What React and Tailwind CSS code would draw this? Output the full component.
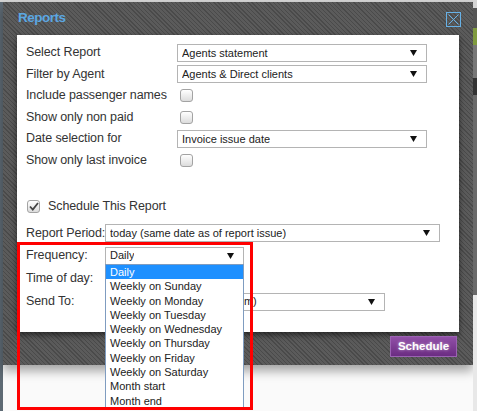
import React from 'react'

const stripes =
  'bg-[image:repeating-linear-gradient(45deg,#4a4a4a_0px,#4a4a4a_1px,#5b5b5b_1px,#5b5b5b_3px)]'

function Arrow() {
  return (
    <svg width="7" height="6" viewBox="0 0 7 6" className="shrink-0">
      <polygon points="0,0 7,0 3.5,6" fill="#111" />
    </svg>
  )
}

function Select({ className = '', children }) {
  return (
    <div
      className={`flex items-center justify-between h-[18px] border border-[#b4b4b4] bg-white pl-[4px] pr-[9px] text-[11px] text-[#222] ${className}`}
    >
      <span className="whitespace-nowrap overflow-hidden">{children}</span>
      <Arrow />
    </div>
  )
}

function Checkbox({ checked = false }) {
  return (
    <div className="w-[13px] h-[13px] rounded-[3px] border border-[#a3a3a3] bg-[linear-gradient(#ffffff,#dcdcdc)] flex items-center justify-center">
      {checked && (
        <svg width="10" height="9" viewBox="0 0 10 9">
          <path d="M1 4.5 L3.8 7.5 L9 1" fill="none" stroke="#444" strokeWidth="1.8" />
        </svg>
      )}
    </div>
  )
}

const rows = [
  { label: 'Select Report', select: 'Agents statement' },
  { label: 'Filter by Agent', select: 'Agents & Direct clients' },
  { label: 'Include passenger names' },
  { label: 'Show only non paid' },
  { label: 'Date selection for', select: 'Invoice issue date' },
  { label: 'Show only last invoice' },
]

const frequencies = [
  'Daily',
  'Weekly on Sunday',
  'Weekly on Monday',
  'Weekly on Tuesday',
  'Weekly on Wednesday',
  'Weekly on Thursday',
  'Weekly on Friday',
  'Weekly on Saturday',
  'Month start',
  'Month end',
]

export default function App() {
  return (
    <div className="relative w-[477px] h-[411px] overflow-hidden bg-[#fafafa] font-['Liberation_Sans',Arial,sans-serif] flex">
      {/* page behind, left edge */}
      <div className="w-[3px] flex flex-col">
        <div className="h-[2px] bg-[#d4d4d4]" />
        <div className="flex-1 bg-[#5e6a74]" />
      </div>

      {/* dialog */}
      <div className="w-[470px] flex flex-col">
        <div className="h-[2px] bg-[#d4d4d4]" />
        <div className={`h-[363px] flex flex-col ${stripes} shadow-[0_6px_10px_rgba(0,0,0,0.35)]`}>
          {/* title bar */}
          <div className="h-[33px] flex items-center justify-between pl-[15px] pr-[12px]">
            <span className="text-[13.5px] font-bold tracking-[-0.5px] text-[#5ba7e2]">Reports</span>
            <div className="w-[15px] h-[15px] border border-[#67b1e6] flex items-center justify-center mt-[1px]">
              <svg width="11" height="11" viewBox="0 0 11 11">
                <path d="M0.5 0.5 L10.5 10.5 M10.5 0.5 L0.5 10.5" stroke="#67b1e6" strokeWidth="1" />
              </svg>
            </div>
          </div>

          {/* white content panel */}
          <div className="mx-[14px] h-[297px] bg-white shadow-[0_3px_6px_rgba(0,0,0,0.55)] pt-[7px] pl-[9px] text-[12.5px] tracking-[-0.1px] text-[#333]">
            {rows.map((row) => (
              <div key={row.label} className="flex items-center h-[21.5px]">
                <span className="w-[151px] whitespace-nowrap">{row.label}</span>
                {row.select ? (
                  <Select className="w-[250px] tracking-normal">{row.select}</Select>
                ) : (
                  <div className="pl-[3px]">
                    <Checkbox />
                  </div>
                )}
              </div>
            ))}

            <div className="flex items-center h-[22px] mt-[24px] pl-[1px] gap-[8px]">
              <Checkbox checked />
              <span>Schedule This Report</span>
            </div>

            <div className="flex items-center h-[22px] mt-[5px]">
              <span className="w-[79px] whitespace-nowrap">Report Period:</span>
              <Select className="w-[335px] tracking-normal">today (same date as of report issue)</Select>
            </div>

            <div className="flex items-center h-[23px]">
              <span className="w-[79px]">Frequency:</span>
              <Select className="w-[139px] h-[17px] tracking-normal border-[#a8a8a8]">Daily</Select>
            </div>
            <div className="flex items-center h-[23px]">
              <span className="w-[79px]">Time of day:</span>
            </div>
            <div className="flex items-center h-[23px]">
              <span className="w-[79px]">Send To:</span>
              <Select className="w-[280px] tracking-normal">Agent email (from the system)</Select>
            </div>
          </div>

          {/* footer */}
          <div className="flex justify-end pr-[16px] pt-[4px]">
            <button className="w-[67px] h-[21px] border border-[#9b63b3] bg-[linear-gradient(#9150a8,#6b2c82)] text-white text-[11.5px] font-bold [text-shadow:0_0_3px_rgba(255,255,255,0.6)]">
              Schedule
            </button>
          </div>
        </div>
      </div>

      {/* page behind, right edge */}
      <div className="w-[4px] flex flex-col">
        <div className="h-[8px] bg-[#d4d4d4]" />
        <div className="h-[20px] bg-[#555]" />
        <div className="h-[17px] bg-[#7f9a3e]" />
        <div className="h-[33px] bg-[#777]" />
        <div className="h-[17px] bg-[#333]" />
        <div className="h-[200px] bg-[#6a6a6a]" />
        <div className="flex-1 bg-[#e8e8e8]" />
      </div>

      {/* open frequency list */}
      <div className="absolute left-[105px] top-[264px] w-[139px] border border-[#7f9cc0] bg-white text-[11px] text-[#222]">
        {frequencies.map((f, i) => (
          <div
            key={f}
            className={`h-[14.3px] leading-[14.3px] pl-[4px] whitespace-nowrap ${
              i === 0 ? 'bg-[#1e90ff] text-white' : ''
            }`}
          >
            {f}
          </div>
        ))}
      </div>

      {/* red annotation frame */}
      <div className="absolute left-[17px] top-[242px] w-[236px] h-[168px] border-[3px] border-[#ff0000]" />
    </div>
  )
}
